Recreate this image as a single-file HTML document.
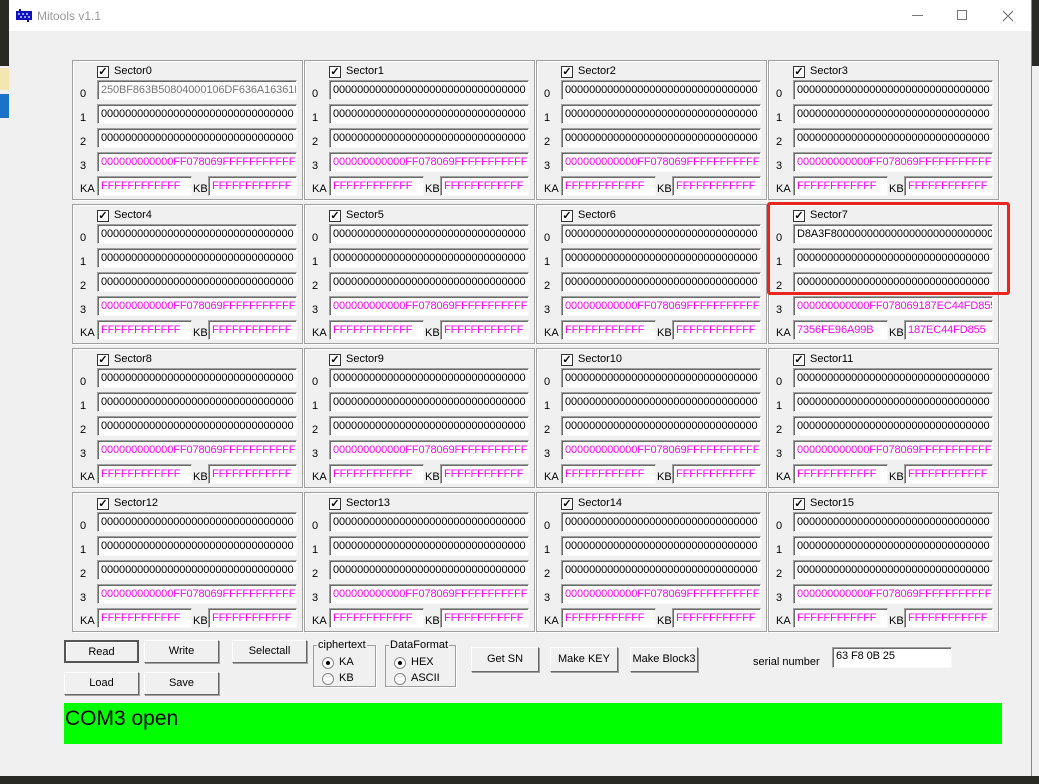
<!DOCTYPE html>
<html><head><meta charset="utf-8"><style>
*{box-sizing:border-box;margin:0;padding:0}
body{width:1039px;height:784px;overflow:hidden;background:#f0f0f0;position:relative;font-family:"Liberation Sans",Arial,sans-serif;font-size:11px;color:#000}
.a{position:absolute}
.p{position:absolute;width:231px;height:140px;border:1px solid #a0a0a0;box-shadow:inset 1px 1px #fff,1px 1px #fff}
.cb{position:absolute;left:24px;top:5px;width:12px;height:12px;border:1px solid #333;background:#fff;font-size:11px;line-height:10px;text-align:center;font-weight:bold}
.st{position:absolute;left:41px;top:4px;font-size:11px}
.f{position:absolute;left:24px;width:200px;height:20px;background:#fff;border:1px solid;border-color:#a0a0a0 #f8f8f8 #f8f8f8 #a0a0a0;box-shadow:inset 1px 1px #6a6a6a;padding:3px 0 0 3px;font-size:11px;line-height:13px;white-space:nowrap;overflow:hidden;letter-spacing:-0.1px}
.m{color:#f0f}
.l{position:absolute;left:7px;font-size:11px}
.k{width:95px}
.kb{left:135px;width:89px}
.kl{left:120px!important}
.btn{position:absolute;height:23px;border:1px solid;border-color:#fff #696969 #696969 #fff;background:#f0f0f0;text-align:center;line-height:20px;font-size:11px;box-shadow:1px 1px #a0a0a0}
.gb{position:absolute;border:1px solid #a0a0a0;box-shadow:1px 1px #fff}
.gb span{position:absolute;top:-7px;left:3px;background:#f0f0f0;padding:0 1px;font-size:11px}
.r{position:absolute;width:12px;height:12px;border-radius:50%;background:#fff;border:1px solid #888}
.r.on:after{content:"";position:absolute;left:3px;top:3px;width:4px;height:4px;border-radius:50%;background:#000}
</style></head><body>
<div class="a" style="left:0;top:0;width:9px;height:66px;background:#2a2a24"></div>
<div class="a" style="left:0;top:68px;width:9px;height:22px;background:#f4e6b0"></div>
<div class="a" style="left:0;top:94px;width:9px;height:24px;background:#1a73c7"></div>
<div class="a" style="left:1031px;top:0;width:8px;height:66px;background:#2a2a24"></div>
<div class="a" style="left:1031px;top:0;width:1px;height:784px;background:#888"></div>
<div class="a" style="left:0;top:776px;width:1039px;height:8px;background:#2a2a24"></div>
<div class="a" style="left:9px;top:0;width:1022px;height:31px;background:#fff"></div>
<svg class="a" style="left:16px;top:9px" width="16" height="13"><rect x="0" y="2" width="16" height="9" fill="#1010c0"/><g fill="#8af"><rect x="2" y="4" width="2" height="2"/><rect x="6" y="4" width="2" height="2"/><rect x="10" y="4" width="2" height="2"/><rect x="4" y="7" width="2" height="2"/><rect x="8" y="7" width="2" height="2"/><rect x="12" y="7" width="2" height="2"/></g><rect x="3" y="0" width="2" height="2" fill="#1010c0"/><rect x="11" y="11" width="2" height="2" fill="#1010c0"/></svg>
<div class="a" style="left:37px;top:9px;font-size:12px;color:#999">Mitools v1.1</div>
<div class="a" style="left:912px;top:15px;width:11px;height:1px;background:#777"></div>
<div class="a" style="left:957px;top:10px;width:10px;height:10px;border:1px solid #777"></div>
<svg class="a" style="left:1002px;top:10px" width="12" height="12"><path d="M1 1L11 11M11 1L1 11" stroke="#777" stroke-width="1.2"/></svg>

<div class="p" style="left:72px;top:60px"><div class="cb">✓</div><div class="st">Sector0</div>
<div class="l" style="top:27px">0</div><div class="f" style="top:19px;color:#777">250BF863B50804000106DF636A16361D</div>
<div class="l" style="top:51px">1</div><div class="f" style="top:43px">00000000000000000000000000000000</div>
<div class="l" style="top:75px">2</div><div class="f" style="top:67px">00000000000000000000000000000000</div>
<div class="l" style="top:99px">3</div><div class="f m" style="top:91px">000000000000FF078069FFFFFFFFFFFF</div>
<div class="l" style="top:122px">KA</div><div class="f k m" style="top:115px">FFFFFFFFFFFF</div><div class="l kl" style="top:122px">KB</div><div class="f kb m" style="top:115px">FFFFFFFFFFFF</div></div>

<div class="p" style="left:304px;top:60px"><div class="cb">✓</div><div class="st">Sector1</div>
<div class="l" style="top:27px">0</div><div class="f" style="top:19px">00000000000000000000000000000000</div>
<div class="l" style="top:51px">1</div><div class="f" style="top:43px">00000000000000000000000000000000</div>
<div class="l" style="top:75px">2</div><div class="f" style="top:67px">00000000000000000000000000000000</div>
<div class="l" style="top:99px">3</div><div class="f m" style="top:91px">000000000000FF078069FFFFFFFFFFFF</div>
<div class="l" style="top:122px">KA</div><div class="f k m" style="top:115px">FFFFFFFFFFFF</div><div class="l kl" style="top:122px">KB</div><div class="f kb m" style="top:115px">FFFFFFFFFFFF</div></div>

<div class="p" style="left:536px;top:60px"><div class="cb">✓</div><div class="st">Sector2</div>
<div class="l" style="top:27px">0</div><div class="f" style="top:19px">00000000000000000000000000000000</div>
<div class="l" style="top:51px">1</div><div class="f" style="top:43px">00000000000000000000000000000000</div>
<div class="l" style="top:75px">2</div><div class="f" style="top:67px">00000000000000000000000000000000</div>
<div class="l" style="top:99px">3</div><div class="f m" style="top:91px">000000000000FF078069FFFFFFFFFFFF</div>
<div class="l" style="top:122px">KA</div><div class="f k m" style="top:115px">FFFFFFFFFFFF</div><div class="l kl" style="top:122px">KB</div><div class="f kb m" style="top:115px">FFFFFFFFFFFF</div></div>

<div class="p" style="left:768px;top:60px"><div class="cb">✓</div><div class="st">Sector3</div>
<div class="l" style="top:27px">0</div><div class="f" style="top:19px">00000000000000000000000000000000</div>
<div class="l" style="top:51px">1</div><div class="f" style="top:43px">00000000000000000000000000000000</div>
<div class="l" style="top:75px">2</div><div class="f" style="top:67px">00000000000000000000000000000000</div>
<div class="l" style="top:99px">3</div><div class="f m" style="top:91px">000000000000FF078069FFFFFFFFFFFF</div>
<div class="l" style="top:122px">KA</div><div class="f k m" style="top:115px">FFFFFFFFFFFF</div><div class="l kl" style="top:122px">KB</div><div class="f kb m" style="top:115px">FFFFFFFFFFFF</div></div>

<div class="p" style="left:72px;top:204px"><div class="cb">✓</div><div class="st">Sector4</div>
<div class="l" style="top:27px">0</div><div class="f" style="top:19px">00000000000000000000000000000000</div>
<div class="l" style="top:51px">1</div><div class="f" style="top:43px">00000000000000000000000000000000</div>
<div class="l" style="top:75px">2</div><div class="f" style="top:67px">00000000000000000000000000000000</div>
<div class="l" style="top:99px">3</div><div class="f m" style="top:91px">000000000000FF078069FFFFFFFFFFFF</div>
<div class="l" style="top:122px">KA</div><div class="f k m" style="top:115px">FFFFFFFFFFFF</div><div class="l kl" style="top:122px">KB</div><div class="f kb m" style="top:115px">FFFFFFFFFFFF</div></div>

<div class="p" style="left:304px;top:204px"><div class="cb">✓</div><div class="st">Sector5</div>
<div class="l" style="top:27px">0</div><div class="f" style="top:19px">00000000000000000000000000000000</div>
<div class="l" style="top:51px">1</div><div class="f" style="top:43px">00000000000000000000000000000000</div>
<div class="l" style="top:75px">2</div><div class="f" style="top:67px">00000000000000000000000000000000</div>
<div class="l" style="top:99px">3</div><div class="f m" style="top:91px">000000000000FF078069FFFFFFFFFFFF</div>
<div class="l" style="top:122px">KA</div><div class="f k m" style="top:115px">FFFFFFFFFFFF</div><div class="l kl" style="top:122px">KB</div><div class="f kb m" style="top:115px">FFFFFFFFFFFF</div></div>

<div class="p" style="left:536px;top:204px"><div class="cb">✓</div><div class="st">Sector6</div>
<div class="l" style="top:27px">0</div><div class="f" style="top:19px">00000000000000000000000000000000</div>
<div class="l" style="top:51px">1</div><div class="f" style="top:43px">00000000000000000000000000000000</div>
<div class="l" style="top:75px">2</div><div class="f" style="top:67px">00000000000000000000000000000000</div>
<div class="l" style="top:99px">3</div><div class="f m" style="top:91px">000000000000FF078069FFFFFFFFFFFF</div>
<div class="l" style="top:122px">KA</div><div class="f k m" style="top:115px">FFFFFFFFFFFF</div><div class="l kl" style="top:122px">KB</div><div class="f kb m" style="top:115px">FFFFFFFFFFFF</div></div>

<div class="p" style="left:768px;top:204px"><div class="cb">✓</div><div class="st">Sector7</div>
<div class="l" style="top:27px">0</div><div class="f" style="top:19px">D8A3F800000000000000000000000000</div>
<div class="l" style="top:51px">1</div><div class="f" style="top:43px">00000000000000000000000000000000</div>
<div class="l" style="top:75px">2</div><div class="f" style="top:67px">00000000000000000000000000000000</div>
<div class="l" style="top:99px">3</div><div class="f m" style="top:91px">000000000000FF078069187EC44FD855</div>
<div class="l" style="top:122px">KA</div><div class="f k m" style="top:115px">7356FE96A99B</div><div class="l kl" style="top:122px">KB</div><div class="f kb m" style="top:115px">187EC44FD855</div></div>

<div class="p" style="left:72px;top:348px"><div class="cb">✓</div><div class="st">Sector8</div>
<div class="l" style="top:27px">0</div><div class="f" style="top:19px">00000000000000000000000000000000</div>
<div class="l" style="top:51px">1</div><div class="f" style="top:43px">00000000000000000000000000000000</div>
<div class="l" style="top:75px">2</div><div class="f" style="top:67px">00000000000000000000000000000000</div>
<div class="l" style="top:99px">3</div><div class="f m" style="top:91px">000000000000FF078069FFFFFFFFFFFF</div>
<div class="l" style="top:122px">KA</div><div class="f k m" style="top:115px">FFFFFFFFFFFF</div><div class="l kl" style="top:122px">KB</div><div class="f kb m" style="top:115px">FFFFFFFFFFFF</div></div>

<div class="p" style="left:304px;top:348px"><div class="cb">✓</div><div class="st">Sector9</div>
<div class="l" style="top:27px">0</div><div class="f" style="top:19px">00000000000000000000000000000000</div>
<div class="l" style="top:51px">1</div><div class="f" style="top:43px">00000000000000000000000000000000</div>
<div class="l" style="top:75px">2</div><div class="f" style="top:67px">00000000000000000000000000000000</div>
<div class="l" style="top:99px">3</div><div class="f m" style="top:91px">000000000000FF078069FFFFFFFFFFFF</div>
<div class="l" style="top:122px">KA</div><div class="f k m" style="top:115px">FFFFFFFFFFFF</div><div class="l kl" style="top:122px">KB</div><div class="f kb m" style="top:115px">FFFFFFFFFFFF</div></div>

<div class="p" style="left:536px;top:348px"><div class="cb">✓</div><div class="st">Sector10</div>
<div class="l" style="top:27px">0</div><div class="f" style="top:19px">00000000000000000000000000000000</div>
<div class="l" style="top:51px">1</div><div class="f" style="top:43px">00000000000000000000000000000000</div>
<div class="l" style="top:75px">2</div><div class="f" style="top:67px">00000000000000000000000000000000</div>
<div class="l" style="top:99px">3</div><div class="f m" style="top:91px">000000000000FF078069FFFFFFFFFFFF</div>
<div class="l" style="top:122px">KA</div><div class="f k m" style="top:115px">FFFFFFFFFFFF</div><div class="l kl" style="top:122px">KB</div><div class="f kb m" style="top:115px">FFFFFFFFFFFF</div></div>

<div class="p" style="left:768px;top:348px"><div class="cb">✓</div><div class="st">Sector11</div>
<div class="l" style="top:27px">0</div><div class="f" style="top:19px">00000000000000000000000000000000</div>
<div class="l" style="top:51px">1</div><div class="f" style="top:43px">00000000000000000000000000000000</div>
<div class="l" style="top:75px">2</div><div class="f" style="top:67px">00000000000000000000000000000000</div>
<div class="l" style="top:99px">3</div><div class="f m" style="top:91px">000000000000FF078069FFFFFFFFFFFF</div>
<div class="l" style="top:122px">KA</div><div class="f k m" style="top:115px">FFFFFFFFFFFF</div><div class="l kl" style="top:122px">KB</div><div class="f kb m" style="top:115px">FFFFFFFFFFFF</div></div>

<div class="p" style="left:72px;top:492px"><div class="cb">✓</div><div class="st">Sector12</div>
<div class="l" style="top:27px">0</div><div class="f" style="top:19px">00000000000000000000000000000000</div>
<div class="l" style="top:51px">1</div><div class="f" style="top:43px">00000000000000000000000000000000</div>
<div class="l" style="top:75px">2</div><div class="f" style="top:67px">00000000000000000000000000000000</div>
<div class="l" style="top:99px">3</div><div class="f m" style="top:91px">000000000000FF078069FFFFFFFFFFFF</div>
<div class="l" style="top:122px">KA</div><div class="f k m" style="top:115px">FFFFFFFFFFFF</div><div class="l kl" style="top:122px">KB</div><div class="f kb m" style="top:115px">FFFFFFFFFFFF</div></div>

<div class="p" style="left:304px;top:492px"><div class="cb">✓</div><div class="st">Sector13</div>
<div class="l" style="top:27px">0</div><div class="f" style="top:19px">00000000000000000000000000000000</div>
<div class="l" style="top:51px">1</div><div class="f" style="top:43px">00000000000000000000000000000000</div>
<div class="l" style="top:75px">2</div><div class="f" style="top:67px">00000000000000000000000000000000</div>
<div class="l" style="top:99px">3</div><div class="f m" style="top:91px">000000000000FF078069FFFFFFFFFFFF</div>
<div class="l" style="top:122px">KA</div><div class="f k m" style="top:115px">FFFFFFFFFFFF</div><div class="l kl" style="top:122px">KB</div><div class="f kb m" style="top:115px">FFFFFFFFFFFF</div></div>

<div class="p" style="left:536px;top:492px"><div class="cb">✓</div><div class="st">Sector14</div>
<div class="l" style="top:27px">0</div><div class="f" style="top:19px">00000000000000000000000000000000</div>
<div class="l" style="top:51px">1</div><div class="f" style="top:43px">00000000000000000000000000000000</div>
<div class="l" style="top:75px">2</div><div class="f" style="top:67px">00000000000000000000000000000000</div>
<div class="l" style="top:99px">3</div><div class="f m" style="top:91px">000000000000FF078069FFFFFFFFFFFF</div>
<div class="l" style="top:122px">KA</div><div class="f k m" style="top:115px">FFFFFFFFFFFF</div><div class="l kl" style="top:122px">KB</div><div class="f kb m" style="top:115px">FFFFFFFFFFFF</div></div>

<div class="p" style="left:768px;top:492px"><div class="cb">✓</div><div class="st">Sector15</div>
<div class="l" style="top:27px">0</div><div class="f" style="top:19px">00000000000000000000000000000000</div>
<div class="l" style="top:51px">1</div><div class="f" style="top:43px">00000000000000000000000000000000</div>
<div class="l" style="top:75px">2</div><div class="f" style="top:67px">00000000000000000000000000000000</div>
<div class="l" style="top:99px">3</div><div class="f m" style="top:91px">000000000000FF078069FFFFFFFFFFFF</div>
<div class="l" style="top:122px">KA</div><div class="f k m" style="top:115px">FFFFFFFFFFFF</div><div class="l kl" style="top:122px">KB</div><div class="f kb m" style="top:115px">FFFFFFFFFFFF</div></div>

<div class="a" style="left:767px;top:202px;width:243px;height:93px;border:3px solid #e8261f;border-radius:3px"></div>

<div class="btn" style="left:64px;top:640px;width:75px;border:2px solid #555;box-shadow:inset 1px 1px #fff">Read</div>
<div class="btn" style="left:144px;top:640px;width:75px">Write</div>
<div class="btn" style="left:232px;top:640px;width:75px">Selectall</div>
<div class="btn" style="left:64px;top:672px;width:75px">Load</div>
<div class="btn" style="left:144px;top:672px;width:75px">Save</div>
<div class="gb" style="left:313px;top:645px;width:63px;height:42px"><span>ciphertext</span>
<div class="r on" style="left:8px;top:11px"></div><div class="a" style="left:25px;top:10px">KA</div>
<div class="r" style="left:8px;top:27px"></div><div class="a" style="left:25px;top:26px">KB</div></div>
<div class="gb" style="left:385px;top:645px;width:71px;height:42px"><span>DataFormat</span>
<div class="r on" style="left:8px;top:11px"></div><div class="a" style="left:25px;top:10px">HEX</div>
<div class="r" style="left:8px;top:27px"></div><div class="a" style="left:25px;top:26px">ASCII</div></div>
<div class="btn" style="left:471px;top:647px;width:68px;height:25px;line-height:22px">Get SN</div>
<div class="btn" style="left:550px;top:647px;width:68px;height:25px;line-height:22px">Make KEY</div>
<div class="btn" style="left:630px;top:647px;width:68px;height:25px;line-height:22px">Make Block3</div>
<div class="a" style="left:753px;top:656px;font-size:11px">serial number</div>
<div class="f" style="left:832px;top:647px;width:120px;height:21px;padding:2px 0 0 3px">63 F8 0B 25</div>
<div class="a" style="left:64px;top:703px;width:938px;height:41px;background:#00ff00;font-size:21px;line-height:31px;padding-left:1px">COM3 open</div>
</body></html>
